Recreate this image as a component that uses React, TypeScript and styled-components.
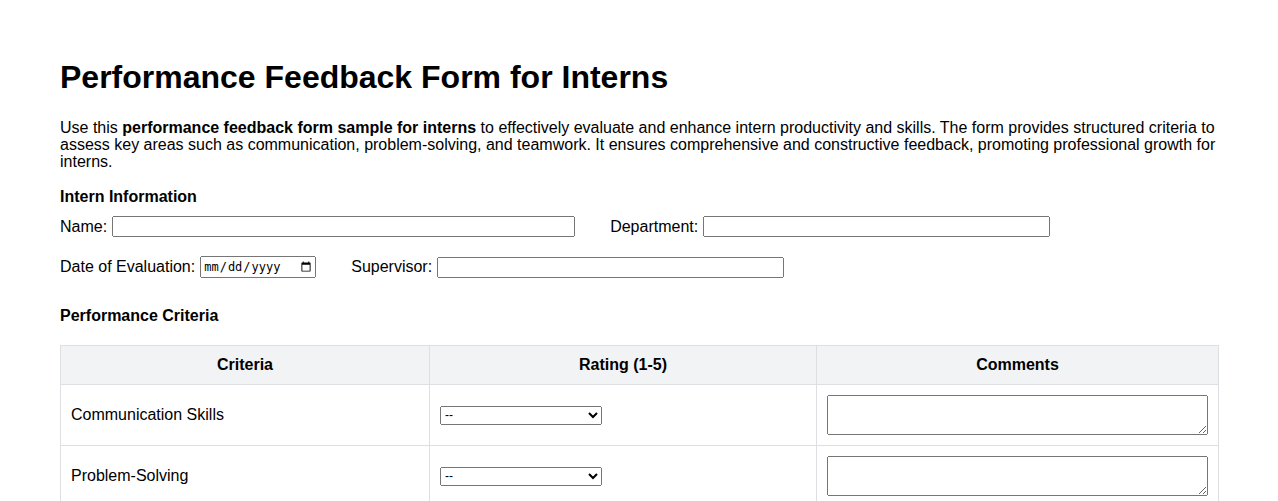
import { createGlobalStyle, styled } from "styled-components";

const GlobalStyle = createGlobalStyle`
	body {
		margin: 0;
		background: #ffffff;
		color: #000000;
		font-family: "Liberation Sans", Arial, sans-serif;
		font-size: 16px;
	}
`;

const Page = styled.div`
	padding: 38px 60px 40px;
`;

const Title = styled.h1`
	font-size: 32px;
	line-height: 37px;
	margin: 21px 0 23px;
`;

const Intro = styled.p`
	line-height: 17px;
	margin: 0 0 18px;
`;

const SectionTitle = styled.h3<{ $gap?: number }>`
	font-size: 16px;
	line-height: 18px;
	margin: ${(p) => p.$gap ?? 0}px 0 0;
`;

const FieldRow = styled.div`
	display: flex;
	align-items: center;
	column-gap: 35px;
	margin-top: 10px;
	& + & {
		margin-top: 19px;
	}
`;

const Field = styled.label`
	display: flex;
	align-items: center;
	column-gap: 5px;
`;

const TextInput = styled.input<{ $w: number }>`
	width: ${(p) => p.$w}px;
	box-sizing: border-box;
	height: 21px;
`;

const DateInput = styled.input`
	width: 116px;
	box-sizing: border-box;
	height: 22px;
	font-size: 12px;
`;

const Table = styled.table`
	width: 100%;
	border-collapse: collapse;
	margin-top: 20px;
	table-layout: fixed;
`;

const HeadCell = styled.th<{ $w: number }>`
	box-sizing: border-box;
	width: ${(p) => p.$w}px;
	background: #f2f3f5;
	border: 1px solid #dddfe3;
	padding: 10px;
	line-height: 18px;
	text-align: center;
	font-weight: bold;
`;

const Cell = styled.td`
	box-sizing: border-box;
	border: 1px solid #dddfe3;
	padding: 10px;
	line-height: 18px;
	text-align: left;
	vertical-align: middle;
`;

const Rating = styled.select`
	width: 162px;
	height: 19px;
	font-size: 12px;
`;

const Comment = styled.textarea`
	display: block;
	width: 100%;
	height: 40px;
	box-sizing: border-box;
	resize: both;
`;

const criteria = ["Communication Skills", "Problem-Solving", "Teamwork"];

const App = () => {
	return (
		<>
			<GlobalStyle />
			<Page>
				<Title>Performance Feedback Form for Interns</Title>
				<Intro>
					Use this <strong>performance feedback form sample for interns</strong> to
					effectively evaluate and enhance intern productivity and skills. The form
					provides structured criteria to assess key areas such as communication,
					problem-solving, and teamwork. It ensures comprehensive and constructive
					feedback, promoting professional growth for interns.
				</Intro>

				<SectionTitle>Intern Information</SectionTitle>
				<FieldRow>
					<Field>
						Name: <TextInput type="text" $w={463} />
					</Field>
					<Field>
						Department: <TextInput type="text" $w={347} />
					</Field>
				</FieldRow>
				<FieldRow>
					<Field>
						Date of Evaluation: <DateInput type="date" />
					</Field>
					<Field>
						Supervisor: <TextInput type="text" $w={347} />
					</Field>
				</FieldRow>

				<SectionTitle $gap={29}>Performance Criteria</SectionTitle>
				<Table>
					<thead>
						<tr>
							<HeadCell $w={369}>Criteria</HeadCell>
							<HeadCell $w={387}>Rating (1-5)</HeadCell>
							<HeadCell $w={402}>Comments</HeadCell>
						</tr>
					</thead>
					<tbody>
						{criteria.map((c) => (
							<tr key={c}>
								<Cell>{c}</Cell>
								<Cell>
									<Rating defaultValue="">
										<option value="">--</option>
										<option value="1">1</option>
										<option value="2">2</option>
										<option value="3">3</option>
										<option value="4">4</option>
										<option value="5">5</option>
									</Rating>
								</Cell>
								<Cell>
									<Comment />
								</Cell>
							</tr>
						))}
					</tbody>
				</Table>
			</Page>
		</>
	);
};

export default App;
